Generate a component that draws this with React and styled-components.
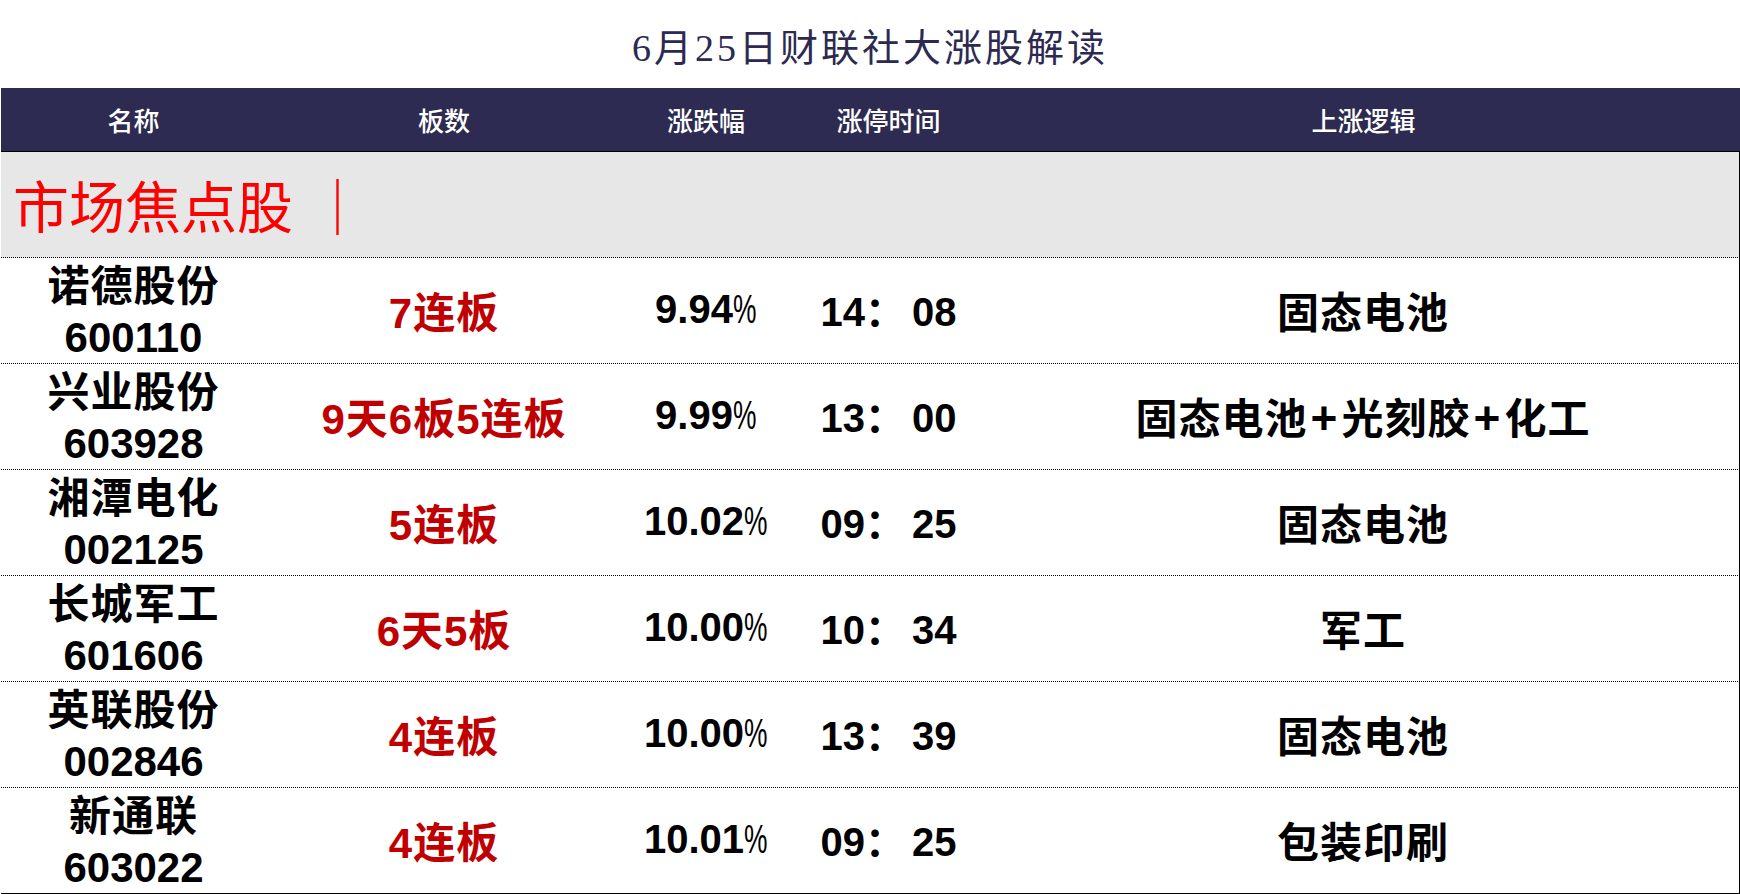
import React from 'react';
import styled, { createGlobalStyle } from 'styled-components';

const Global = createGlobalStyle`
  html, body { margin: 0; padding: 0; background: #ffffff; }
  body { width: 1740px; height: 894px; overflow: hidden; }
`;

const Page = styled.div`
  width: 1740px;
  height: 894px;
  display: flex;
  flex-direction: column;
  background: #fff;
  font-family: "Liberation Sans", "Noto Sans CJK SC", sans-serif;
`;

const Title = styled.h1`
  margin: 0;
  height: 88px;
  display: flex;
  align-items: center;
  justify-content: center;
  padding-top: 0;
  box-sizing: border-box;
  font-family: "Liberation Serif", "Noto Sans CJK SC", serif;
  font-weight: 400;
  font-size: 38px;
  letter-spacing: 3px;
  color: #2c2a50;
`;

const Table = styled.div`
  margin-left: 1px;
  display: flex;
  flex-direction: column;
`;

const cols = '265px 356px 168px 197px 1fr';

const HeaderRow = styled.div`
  display: grid;
  grid-template-columns: ${cols};
  height: 64px;
  box-sizing: border-box;
  background: #2d2b52;
  border-bottom: 1px solid #000;
`;

const HeadCell = styled.div`
  display: flex;
  align-items: center;
  justify-content: center;
  color: #fff;
  font-family: "Noto Sans CJK SC", sans-serif;
  font-weight: 500;
  font-size: 26px;
`;

const SectionBand = styled.div`
  height: 106px;
  box-sizing: border-box;
  background: #e7e7e7;
  border-right: 1px solid #000;
  border-bottom: 1px dotted #000;
  display: flex;
  align-items: center;
  padding-left: 12px;
  padding-bottom: 2px;
  font-family: "Noto Sans CJK SC", serif;
  font-size: 56px;
  font-weight: 400;
  color: #ff0000;
  white-space: pre;
`;

const Bar = styled.span`
  margin-left: 4px;
`;

const Row = styled.div`
  display: grid;
  grid-template-columns: ${cols};
  height: 106px;
  box-sizing: border-box;
  border-right: 1px solid #000;
  border-bottom: 1px ${p => (p.$last ? 'solid' : 'dotted')} #000;
`;

const Cell = styled.div`
  display: flex;
  flex-direction: column;
  align-items: center;
  justify-content: center;
  padding: ${p => (p.$stack ? '3px 0 0' : '0 0 3px')};
  box-sizing: border-box;
  font-weight: 700;
  font-size: ${p => p.$size || 42}px;
  color: ${p => p.$color || '#000'};
  letter-spacing: ${p => p.$ls || 0}px;
  white-space: nowrap;
`;

const Line = styled.div`
  line-height: 51px;
  letter-spacing: ${p => p.$ls || 0}px;
`;

const Pct = styled.span`
  display: inline-block;
  width: 24px;
  font-weight: 400;
  transform: scaleX(0.66);
  transform-origin: left center;
`;

const Colon = styled.span`
  display: inline-block;
  width: 47px;
  text-align: left;
  font-family: "Noto Sans CJK SC", sans-serif;
`;

const Plus = styled.span`
  display: inline-block;
  font-size: 46px;
  margin: 0 3px;
`;

const data = [
  { name: '诺德股份', code: '600110', board: '7连板', pct: '9.94', time: ['14', '08'], logic: ['固态电池'] },
  { name: '兴业股份', code: '603928', board: '9天6板5连板', pct: '9.99', time: ['13', '00'], logic: ['固态电池', '光刻胶', '化工'] },
  { name: '湘潭电化', code: '002125', board: '5连板', pct: '10.02', time: ['09', '25'], logic: ['固态电池'] },
  { name: '长城军工', code: '601606', board: '6天5板', pct: '10.00', time: ['10', '34'], logic: ['军工'] },
  { name: '英联股份', code: '002846', board: '4连板', pct: '10.00', time: ['13', '39'], logic: ['固态电池'] },
  { name: '新通联', code: '603022', board: '4连板', pct: '10.01', time: ['09', '25'], logic: ['包装印刷'] },
];

const headers = ['名称', '板数', '涨跌幅', '涨停时间', '上涨逻辑'];

export default function App() {
  return (
    <Page>
      <Global />
      <Title>6月25日财联社大涨股解读</Title>
      <Table>
        <HeaderRow>
          {headers.map(h => (
            <HeadCell key={h}>{h}</HeadCell>
          ))}
        </HeaderRow>
        <SectionBand>
          市场焦点股 <Bar>｜</Bar>
        </SectionBand>
        {data.map((r, i) => (
          <Row key={r.code} $last={i === data.length - 1}>
            <Cell $stack>
              <Line $ls={1}>{r.name}</Line>
              <Line>{r.code}</Line>
            </Cell>
            <Cell $color="#c00000" $ls={1}>{r.board}</Cell>
            <Cell $size={40}>
              <span>
                {r.pct}
                <Pct>%</Pct>
              </span>
            </Cell>
            <Cell $size={40}>
              <span>
                {r.time[0]}
                <Colon>：</Colon>
                {r.time[1]}
              </span>
            </Cell>
            <Cell $ls={1}>
              <span>
                {r.logic.map((l, j) => (
                  <React.Fragment key={l}>
                    {j > 0 && <Plus>+</Plus>}
                    {l}
                  </React.Fragment>
                ))}
              </span>
            </Cell>
          </Row>
        ))}
      </Table>
    </Page>
  );
}
